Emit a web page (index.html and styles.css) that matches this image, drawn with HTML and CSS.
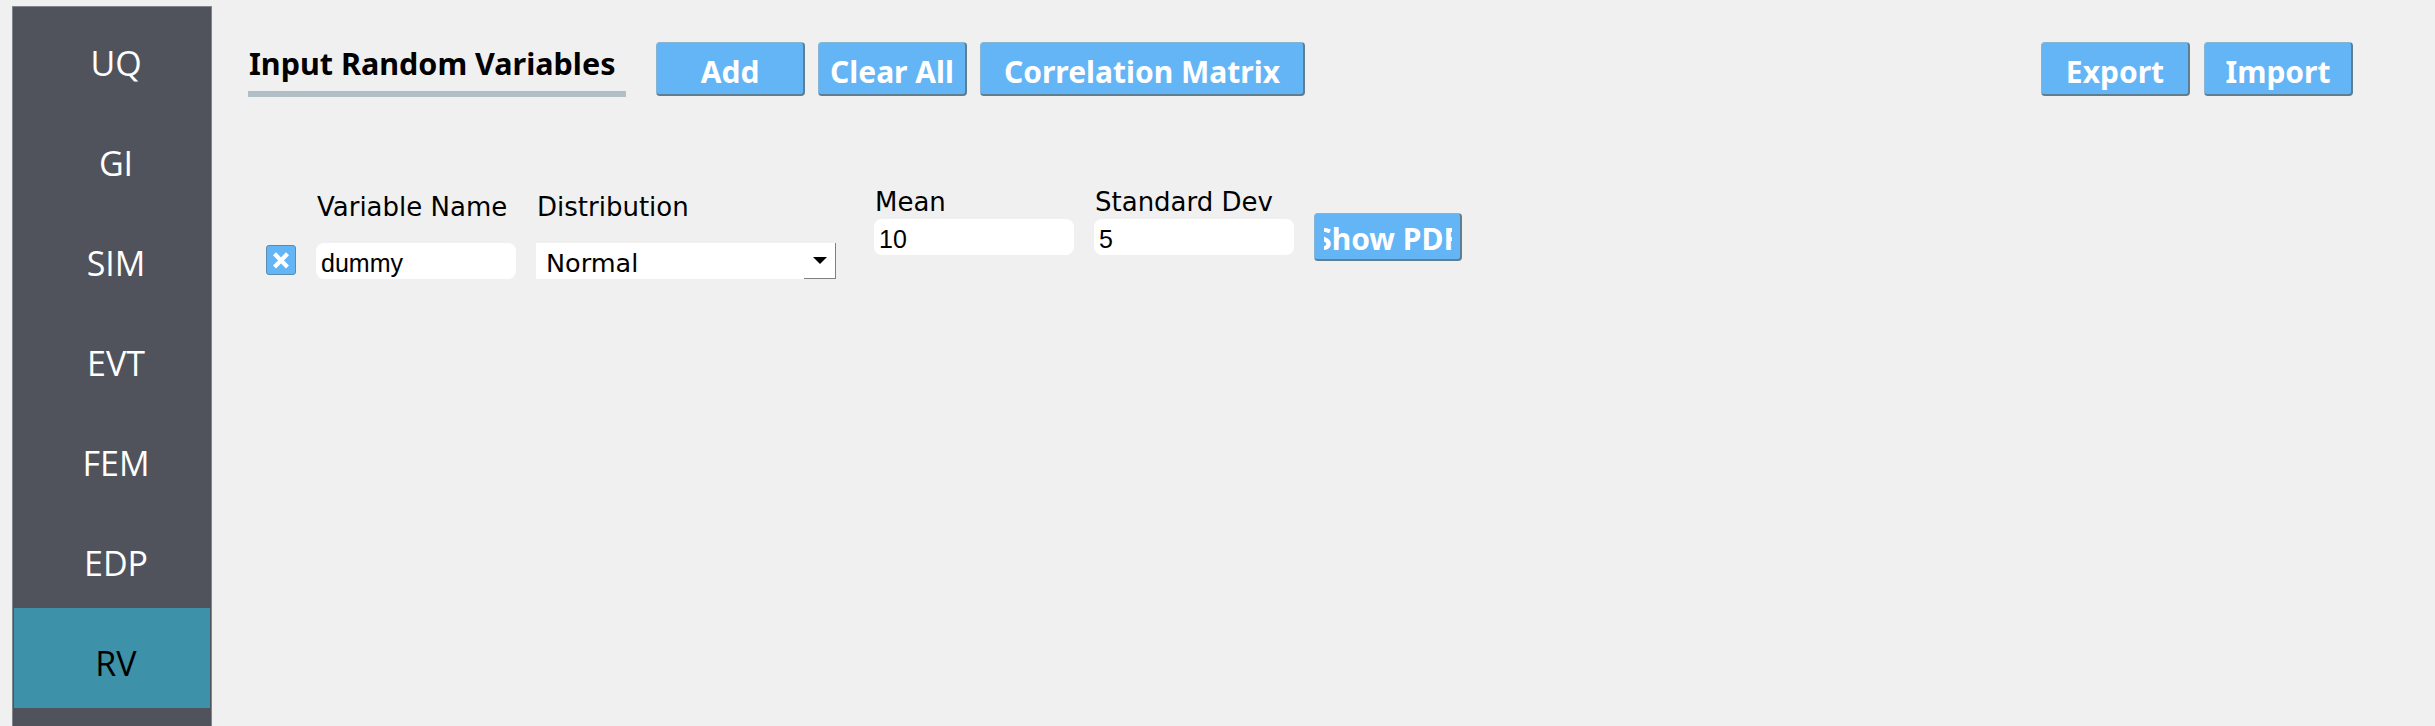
FILE: index.html
```html
<!DOCTYPE html>
<html>
<head>
<meta charset="utf-8">
<title>Input Random Variables</title>
<link rel="stylesheet" href="styles.css">
</head>
<body>
<div class="app">
  <nav class="sidebar">
    <div class="nav-item">UQ</div>
    <div class="nav-item">GI</div>
    <div class="nav-item">SIM</div>
    <div class="nav-item">EVT</div>
    <div class="nav-item">FEM</div>
    <div class="nav-item">EDP</div>
    <div class="nav-item active">RV</div>
    <div class="nav-item"></div>
  </nav>
  <main class="content">
    <div class="header">
      <div class="title-block">
        <div class="title">Input Random Variables</div>
        <div class="title-rule"></div>
      </div>
      <div class="btn-group">
        <button class="btn">Add</button>
        <button class="btn">Clear All</button>
        <button class="btn btn-wide">Correlation Matrix</button>
      </div>
      <div class="btn-group right">
        <button class="btn">Export</button>
        <button class="btn">Import</button>
      </div>
    </div>
    <div class="var-row">
      <div class="check">
        <svg width="30" height="30" viewBox="0 0 30 30"><path d="M8.5 8.8 L21.5 22 M21.5 8.8 L8.5 22" stroke="#ffffff" stroke-width="4.2" fill="none"/></svg>
      </div>
      <div class="col col-low col-name">
        <div class="label">Variable Name</div>
        <div class="field">dummy</div>
      </div>
      <div class="col col-low col-dist">
        <div class="label">Distribution</div>
        <div class="combo">
          <span class="combo-text">Normal</span>
          <span class="combo-btn"><svg width="14" height="7" viewBox="0 0 14 7"><polygon points="0,0 14,0 7,7" fill="#000"/></svg></span>
        </div>
      </div>
      <div class="col col-high col-mean">
        <div class="label">Mean</div>
        <div class="field">10</div>
      </div>
      <div class="col col-high col-std">
        <div class="label">Standard Dev</div>
        <div class="field">5</div>
      </div>
      <button class="btn btn-pdf"><span class="clip">Show PDF</span></button>
    </div>
  </main>
</div>
</body>
</html>
```
FILE: styles.css
```css
html, body {
  margin: 0;
  padding: 0;
  background: #f0f0f0;
  height: 100%;
  overflow: hidden;
}

.app {
  display: flex;
  align-items: flex-start;
  width: 2435px;
  height: 726px;
  overflow: hidden;
}

.sidebar {
  box-sizing: border-box;
  width: 200px;
  height: 720px;
  margin-left: 12px;
  margin-top: 6px;
  padding: 1px;
  background: #50535b;
  border: 1px solid #80848b;
  border-bottom: none;
  flex: none;
  overflow: hidden;
}

.nav-item {
  height: 100px;
  flex: none;
  box-sizing: border-box;
  padding-top: 9px;
  padding-left: 8px;
  display: flex;
  align-items: center;
  justify-content: center;
  color: #ffffff;
  font-family: "Open Sans", "Noto Sans", sans-serif;
  font-size: 34px;
}

.nav-item.active {
  background: #3d91a8;
  color: #000000;
}

.content {
  flex: 1;
  padding-left: 36px;
  padding-top: 42px;
  padding-right: 82px;
}

.header {
  display: flex;
  align-items: flex-start;
}

.title-block {
  width: 378px;
  padding-top: 1px;
}

.title {
  font-family: "Noto Sans", sans-serif;
  font-weight: 700;
  font-size: 30.5px;
  line-height: 40px;
  padding-left: 1px;
  color: #000;
  white-space: nowrap;
}

.title-rule {
  height: 6px;
  margin-top: 8px;
  background: #b0bec5;
}

.btn-group {
  display: flex;
  gap: 13px;
  margin-left: 30px;
}

.btn-group.right {
  margin-left: auto;
  gap: 14px;
}

.btn {
  box-sizing: border-box;
  width: 149px;
  height: 54px;
  padding: 6px 0 0;
  display: flex;
  align-items: center;
  justify-content: center;
  background: #64b5f6;
  border-style: solid;
  border-width: 1px 2px 2px 1px;
  border-color: #86b5d3 #5f7e90 #5f7e90 #86b5d3;
  border-radius: 4px;
  color: #ffffff;
  font-family: "Noto Sans", sans-serif;
  font-weight: 700;
  font-size: 30px;
  line-height: 40px;
  white-space: nowrap;
}

.btn-wide {
  width: 325px;
}

.var-row {
  display: flex;
  align-items: flex-start;
  gap: 20px;
  margin-top: 90px;
  padding-left: 18px;
}

.check {
  box-sizing: border-box;
  width: 30px;
  height: 30px;
  margin-top: 58px;
  background: #64b5f6;
  border: 1px solid #5a8cae;
  border-radius: 3px;
  display: flex;
  align-items: center;
  justify-content: center;
}

.check svg {
  display: block;
  margin: -1px;
}

.col {
  display: flex;
  flex-direction: column;
}

.col-low {
  margin-top: 5px;
  gap: 21px;
}

.col-high {
  gap: 2px;
}

.col-name, .col-mean, .col-std {
  width: 200px;
}

.col-dist {
  width: 300px;
  margin-right: 18px;
}

.label {
  font-family: "DejaVu Sans", sans-serif;
  font-size: 26px;
  line-height: 30px;
  color: #000;
  padding-left: 1px;
  white-space: nowrap;
}

.field {
  box-sizing: border-box;
  height: 36px;
  background: #ffffff;
  border-radius: 8px;
  padding: 6px 0 0 5px;
  font-family: "Liberation Sans", Arial, sans-serif;
  font-size: 25px;
  line-height: 28px;
  color: #000;
  overflow: hidden;
  white-space: nowrap;
}

.combo {
  height: 36px;
  display: flex;
  background: #ffffff;
  overflow: hidden;
}

.combo-text {
  flex: 1;
  padding: 5px 0 0 10px;
  font-family: "DejaVu Sans", sans-serif;
  font-size: 25.5px;
  line-height: 30px;
  color: #000;
  overflow: hidden;
  white-space: nowrap;
}

.combo-btn {
  box-sizing: border-box;
  width: 32px;
  height: 36px;
  border-right: 1px solid #808080;
  border-bottom: 1px solid #808080;
  display: flex;
  align-items: center;
  justify-content: center;
  padding-bottom: 1px;
}

.combo-btn svg {
  display: block;
}

.btn-pdf {
  width: 148px;
  height: 48px;
  margin-top: 26px;
  padding: 5px 0 0;
  overflow: hidden;
}

.clip {
  display: flex;
  justify-content: center;
  width: 128px;
  overflow: hidden;
}
```
